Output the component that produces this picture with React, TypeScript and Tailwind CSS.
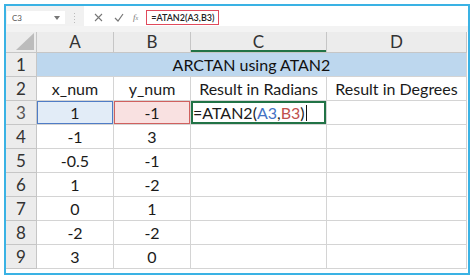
import React from 'react'

const font = { fontFamily: 'Lato, "Open Sans", sans-serif' }

const rows: [string, string][] = [
  ['-1', '3'],
  ['-0.5', '-1'],
  ['1', '-2'],
  ['0', '1'],
  ['-2', '-2'],
  ['3', '0'],
]

const cell = 'flex items-center justify-center border-r border-b border-[#d4d4d4] text-[16px] text-[#1a1a1a]'
const rowHead = 'flex items-center justify-center border-r border-b border-[#c6c6c6] bg-[#ececec] text-[16px] text-[#333]'

export default function App() {
  return (
    <div className="w-[474px] h-[279px] bg-white pt-[4px] pl-[4px]" style={font}>
      <div className="w-[466px] h-[271px] border-2 border-[#3ab2e4] bg-white flex flex-col">
        {/* formula bar */}
        <div className="h-[20px] flex bg-[#f1f1f1]">
          <div className="ml-[1px] mt-[5px] w-[58px] h-[13px] bg-white flex items-center justify-between px-[5px]">
            <span className="text-[8px] text-[#555]">C3</span>
            <svg width="6" height="4" viewBox="0 0 6 4"><path d="M0 0h6L3 4z" fill="#777" /></svg>
          </div>
          <div className="w-[19px] flex items-center justify-center mt-[3px]">
            <svg width="2" height="10" viewBox="0 0 2 10"><g fill="#bbb"><rect y="0" width="1" height="1" /><rect y="3" width="1" height="1" /><rect y="6" width="1" height="1" /><rect y="9" width="1" height="1" /></g></svg>
          </div>
          <div className="flex-1 bg-white flex items-center pl-[10px] pt-[3px]">
            <svg width="9" height="9" viewBox="0 0 9 9"><path d="M1 1l7 7M8 1L1 8" stroke="#777" strokeWidth="1.1" /></svg>
            <svg width="10" height="9" viewBox="0 0 10 9" className="ml-[11px]"><path d="M1 5l3 3 5-7" stroke="#777" strokeWidth="1.2" fill="none" /></svg>
            <span className="ml-[9px] text-[9px] italic text-[#777]" style={{ fontFamily: '"Liberation Serif", serif' }}>f<span className="text-[6px]">x</span></span>
            <div className="ml-[8px] h-[15px] border border-[#e04a5c] flex items-center px-[4px] text-[9px] font-semibold text-[#222]">=ATAN2(A3,B3)</div>
          </div>
        </div>
        <div className="h-[6px] bg-[#f3f3f3]" />
        {/* grid */}
        <div className="grid grid-cols-[31px_77px_77px_136px_140px] grid-rows-[21px_repeat(9,24px)]">
          <div className="flex items-end justify-end border-r border-b border-[#c6c6c6] bg-[#ececec] pr-[2px] pb-[2px]">
            <svg width="18" height="17" viewBox="0 0 18 17"><path d="M18 0v17H0z" fill="#bcbcbc" /></svg>
          </div>
          <div className={`${rowHead} text-[17px] text-[#222]`}>A</div>
          <div className={`${rowHead} text-[17px] text-[#222]`}>B</div>
          <div className={`${rowHead} bg-[#d4d4d4] text-[17px] text-[#3d5a45] shadow-[inset_0_-2px_0_#217346]`}>C</div>
          <div className={`${rowHead} text-[17px] text-[#222]`}>D</div>

          <div className={`${rowHead} text-[17px]`}>1</div>
          <div className={`${cell} col-span-4 bg-[#bdd7ee] text-[15.5px] text-[#111]`}>ARCTAN using ATAN2</div>

          <div className={`${rowHead} text-[17px]`}>2</div>
          <div className={cell}>x_num</div>
          <div className={cell}>y_num</div>
          <div className={cell}>Result in Radians</div>
          <div className={cell}>Result in Degrees</div>

          <div className={`${rowHead} bg-[#d4d4d4] text-[17px] text-[#555]`}>3</div>
          <div className={`${cell} bg-[#e2ecf7] shadow-[inset_0_0_0_1px_#4f7cc6]`}>1</div>
          <div className={`${cell} bg-[#f9e1e1] shadow-[inset_0_0_0_1px_#d0605e]`}>-1</div>
          <div className={`${cell} justify-start pl-[2px] shadow-[inset_0_0_0_2px_#217346]`}>
            <span>=ATAN2(</span>
            <span className="text-[#4472c4]">A3</span>
            <span>,</span>
            <span className="text-[#c0504d]">B3</span>
            <span>)</span>
            <span className="ml-[1px] w-[1px] h-[16px] bg-[#111]" />
          </div>
          <div className={cell} />

          {rows.map(([x, y], i) => (
            <React.Fragment key={i}>
              <div className={`${rowHead} text-[17px]`}>{i + 4}</div>
              <div className={cell}>{x}</div>
              <div className={cell}>{y}</div>
              <div className={cell} />
              <div className={cell} />
            </React.Fragment>
          ))}
        </div>
      </div>
    </div>
  )
}
